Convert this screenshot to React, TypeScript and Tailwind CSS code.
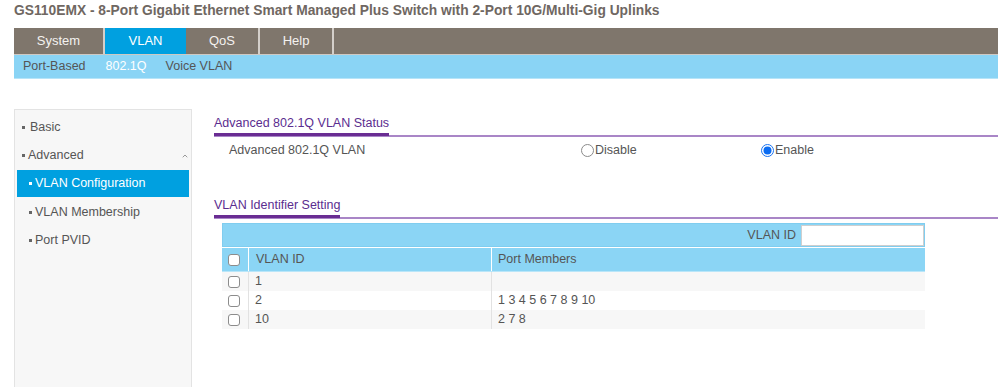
import { ChevronUp } from 'lucide-react'

const tabs = [
  { label: 'System', w: 'w-[91px] border-r-2', active: false },
  { label: 'VLAN', w: 'w-[81px]', active: true },
  { label: 'QoS', w: 'w-[74px] border-r-2', active: false },
  { label: 'Help', w: 'w-[74px] border-r-2', active: false },
]

const rows = [
  { id: '1', members: '' },
  { id: '2', members: '1 3 4 5 6 7 8 9 10' },
  { id: '10', members: '2 7 8' },
]

function Bullet({ light }: { light?: boolean }) {
  return <span className={`inline-block w-[3px] h-[3px] ${light ? 'bg-white' : 'bg-[#666]'}`} />
}

function Checkbox() {
  return <span className="block w-[12px] h-[12px] rounded-[3px] border border-[#8c8c8c] bg-white" />
}

function Radio({ checked }: { checked?: boolean }) {
  return checked ? (
    <svg width="13" height="13" viewBox="0 0 13 13">
      <circle cx="6.5" cy="6.5" r="6" fill="white" stroke="#1a73f0" strokeWidth="1" />
      <circle cx="6.5" cy="6.5" r="4" fill="#0b6cf2" />
    </svg>
  ) : (
    <svg width="13" height="13" viewBox="0 0 13 13">
      <circle cx="6.5" cy="6.5" r="6" fill="white" stroke="#8a8a8a" strokeWidth="1" />
    </svg>
  )
}

function SectionHeader({ title }: { title: string }) {
  return (
    <div className="flex border-b-2 border-[#a986c7]">
      <span className="block mb-[-1px] pb-[2px] leading-[16px] border-b-[3px] border-[#6a2d93] text-[12.5px] text-[#5b2d8f]">
        {title}
      </span>
    </div>
  )
}

export default function App() {
  return (
    <div className="w-[998px] h-[387px] overflow-hidden bg-white font-['Liberation_Sans',Arial,sans-serif] text-[12.5px] text-[#555]">
      {/* Title */}
      <h1 className="h-[28px] pl-[14px] pt-[2px] text-[13.8px] leading-[17px] font-bold text-[#6f6762]">
        GS110EMX - 8-Port Gigabit Ethernet Smart Managed Plus Switch with 2-Port 10G/Multi-Gig Uplinks
      </h1>

      {/* Main nav */}
      <div className="ml-[14px] flex h-[27px] bg-[#7f766c] border-b border-[#cfc9c3]">
        {tabs.map((t) => (
          <div
            key={t.label}
            className={`${t.w} flex items-center justify-center text-[13px] text-[#f4f2f0] border-[#d4cfca] ${
              t.active ? 'bg-[#00a0e0] text-white' : ''
            }`}
          >
            {t.label}
          </div>
        ))}
      </div>

      {/* Sub nav */}
      <div className="ml-[14px] flex items-center h-[24px] bg-[#8ad4f5] border-b border-[#b7e4f8] text-[12.5px]">
        <span className="ml-[9px] text-[#555]">Port-Based</span>
        <span className="ml-[20px] text-white">802.1Q</span>
        <span className="ml-[19px] text-[#555]">Voice VLAN</span>
      </div>

      <div className="flex mt-[30px]">
        {/* Sidebar */}
        <aside className="ml-[14px] w-[178px] h-[300px] shrink-0 bg-[#f7f7f7] border border-[#e3e3e3] pt-[3px] text-[12.5px]">
          <div className="h-[28px] flex items-center gap-[5px] pl-[7px]">
            <Bullet />
            <span>Basic</span>
          </div>
          <div className="h-[29px] flex items-center gap-[3px] pl-[7px] pr-[2px]">
            <Bullet />
            <span className="flex-1">Advanced</span>
            <ChevronUp className="w-[8px] h-[8px] text-[#999]" strokeWidth={3} />
          </div>
          <div className="mx-[2px] h-[27px] flex items-center gap-[3px] pl-[12px] bg-[#00a0e0] text-white">
            <Bullet light />
            <span>VLAN Configuration</span>
          </div>
          <div className="h-[30px] flex items-center gap-[3px] pl-[14px]">
            <Bullet />
            <span>VLAN Membership</span>
          </div>
          <div className="h-[26px] flex items-center gap-[3px] pl-[14px]">
            <Bullet />
            <span>Port PVID</span>
          </div>
        </aside>

        {/* Content */}
        <main className="ml-[22px] flex-1 pt-[6px]">
          <SectionHeader title="Advanced 802.1Q VLAN Status" />
          <div className="h-[26px] flex items-center">
            <span className="pl-[15px] w-[367px]">Advanced 802.1Q VLAN</span>
            <label className="w-[180px] flex items-center gap-[1px]">
              <Radio />
              <span>Disable</span>
            </label>
            <label className="flex items-center gap-[1px]">
              <Radio checked />
              <span>Enable</span>
            </label>
          </div>

          <div className="mt-[34px]">
            <SectionHeader title="VLAN Identifier Setting" />
          </div>

          {/* Table */}
          <div className="ml-[8px] mt-[4px] w-[703px]">
            <div className="h-[24px] flex items-center justify-end bg-[#8bd5f5] border border-[#80cdef]">
              <span className="mr-[5px]">VLAN ID</span>
              <input className="w-[123px] h-[21px] bg-white border border-[#cfcfcf] outline-none" />
            </div>
            <div className="flex h-[24px] mt-[1px] bg-[#8bd5f5] border-b border-[#b9e6f9]">
              <div className="w-[27px] flex items-center pl-[6px] border-r border-white">
                <Checkbox />
              </div>
              <div className="w-[243px] flex items-center pl-[7px] border-r border-white">VLAN ID</div>
              <div className="flex-1 flex items-center pl-[6px]">Port Members</div>
            </div>
            {rows.map((r, i) => (
              <div key={r.id} className={`flex h-[19px] ${i % 2 === 0 ? 'bg-[#f7f7f7]' : 'bg-white'}`}>
                <div className="w-[27px] flex items-center pl-[6px] border-r border-[#e2e2e2]">
                  <Checkbox />
                </div>
                <div className="w-[243px] flex items-center pl-[6px] border-r border-[#e2e2e2]">{r.id}</div>
                <div className="flex-1 flex items-center pl-[6px]">{r.members}</div>
              </div>
            ))}
          </div>
        </main>
      </div>
    </div>
  )
}
